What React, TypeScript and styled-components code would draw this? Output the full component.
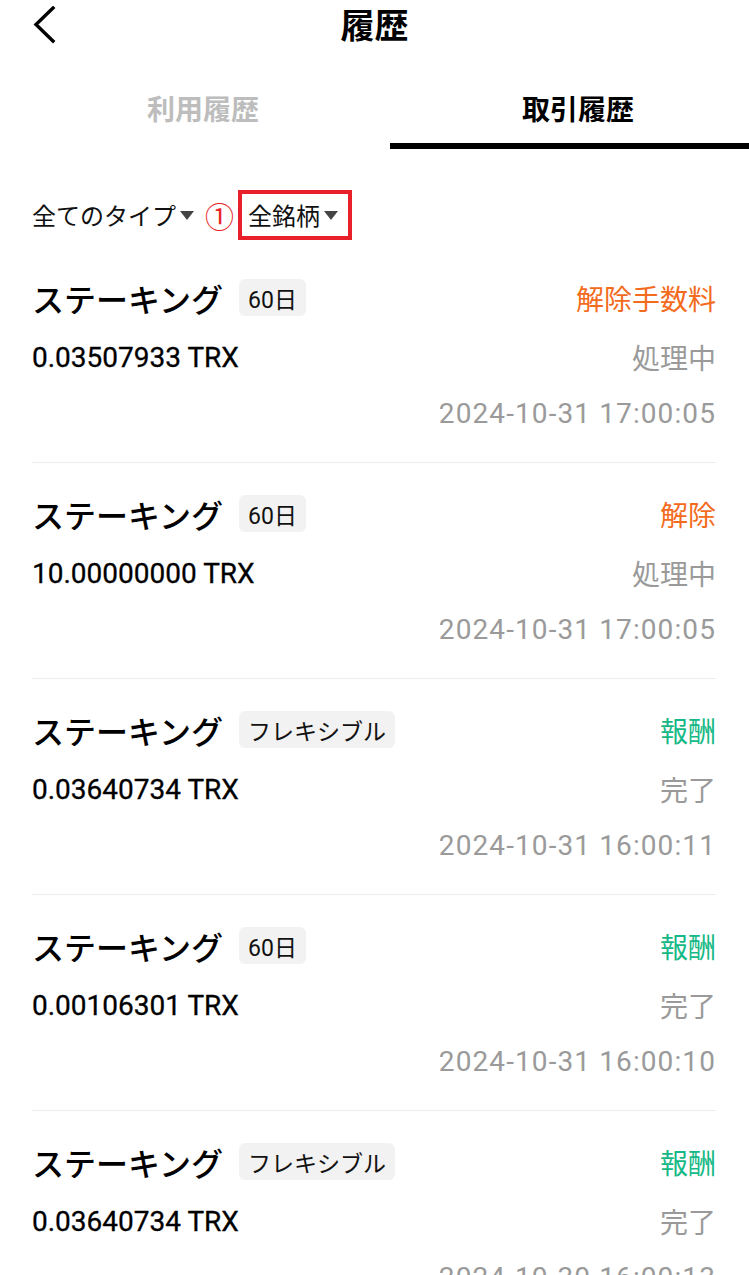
import React from "react";
import styled, { createGlobalStyle } from "styled-components";

const GlobalStyle = createGlobalStyle`
  *{
    box-sizing:border-box;
  }
  html, body{
    margin:0;
    padding:0;
    background:#fff;
    overflow:hidden;
    font-family:"Roboto", "Noto Sans CJK JP", sans-serif;
    color:#111;
  }
`;

const Page = styled.div`
  width: 749px;
  height: 1275px;
  overflow: hidden;
  background: #fff;
`;

const Header = styled.header`
  height: 50px;
  display: grid;
  grid-template-columns: 1fr auto 1fr;
  align-items: center;
`;

const BackButton = styled.button`
  all: unset;
  padding-left: 32px;
  display: flex;
  align-items: center;
  height: 50px;
  cursor: pointer;
`;

const Title = styled.h1`
  margin: 0;
  padding-bottom: 3px;
  font-family: "Noto Sans CJK JP", sans-serif;
  font-size: 34px;
  font-weight: 700;
  line-height: 1.4;
  color: #000;
`;

const TabBar = styled.nav`
  display: grid;
  grid-template-columns: 374px 376px;
  margin-left: 16px;
`;

const Tab = styled.div<{ active: boolean }>`
  height: 99px;
  padding-top: 23px;
  display: flex;
  align-items: center;
  justify-content: center;
  font-family: "Noto Sans CJK JP", sans-serif;
  font-size: 28px;
  font-weight: 700;
  color: ${(props) => (props.active ? "#000" : "#bdbdbd")};
  border-bottom: 6px solid ${(props) => (props.active ? "#000" : "transparent")};
`;

const FilterRow = styled.div`
  display: flex;
  align-items: center;
  padding: 41px 0 0 32px;
  margin-bottom: 7px;
`;

const Filter = styled.div`
  display: flex;
  align-items: center;
  gap: 4px;
  font-family: "Noto Sans CJK JP", sans-serif;
  font-size: 24px;
  color: #111;
  line-height: 1;
`;

const Caret = styled.span`
  width: 0;
  height: 0;
  border-left: 7px solid transparent;
  border-right: 7px solid transparent;
  border-top: 9px solid #444;
`;

const Marker = styled.span`
  margin-left: 11px;
  margin-right: 4px;
  font-family: "Noto Sans CJK JP", sans-serif;
  font-size: 29px;
  line-height: 1;
  color: #e8262a;
`;

const Highlight = styled.div`
  height: 50px;
  padding: 0 10px 0 6px;
  border: 4px solid #e8202a;
  display: flex;
  align-items: center;
`;

const List = styled.section`
  padding: 0 33px 0 32px;
`;

const Card = styled.article`
  padding: 32px 0 29px;
  border-bottom: 1px solid #ececec;
`;

const Row = styled.div<{ top: number; height: number }>`
  display: flex;
  align-items: center;
  justify-content: space-between;
  height: ${(props) => props.height}px;
  margin-top: ${(props) => props.top}px;
`;

const Left = styled.div`
  display: flex;
  align-items: center;
`;

const Name = styled.span`
  font-family: "Noto Sans CJK JP", sans-serif;
  font-size: 32px;
  font-weight: 500;
  color: #000;
`;

const Tag = styled.span`
  margin-left: 16px;
  height: 37px;
  padding: 0 9px;
  border-radius: 6px;
  background: #f2f2f2;
  display: flex;
  align-items: center;
  font-family: "Roboto", "Noto Sans CJK JP", sans-serif;
  font-size: 23px;
  color: #111;
`;

const Kind = styled.span<{ tone: "orange" | "green" }>`
  font-family: "Noto Sans CJK JP", sans-serif;
  font-size: 28px;
  color: ${(props) => (props.tone === "orange" ? "#f36b1c" : "#16b985")};
`;

const Amount = styled.span`
  font-size: 28px;
  font-weight: 400;
  color: #000;
  -webkit-text-stroke: 0.3px #000;
`;

const Muted = styled.span<{ spaced?: boolean }>`
  font-family: "Roboto", "Noto Sans CJK JP", sans-serif;
  font-size: 28px;
  color: #9a9a9a;
  letter-spacing: ${(props) => (props.spaced ? "1.1px" : "0")};
`;

interface IRecord {
  term: string;
  kind: string;
  tone: "orange" | "green";
  amount: string;
  status: string;
  time: string;
}

const records: IRecord[] = [
  {
    term: "60日",
    kind: "解除手数料",
    tone: "orange",
    amount: "0.03507933 TRX",
    status: "処理中",
    time: "2024-10-31 17:00:05",
  },
  {
    term: "60日",
    kind: "解除",
    tone: "orange",
    amount: "10.00000000 TRX",
    status: "処理中",
    time: "2024-10-31 17:00:05",
  },
  {
    term: "フレキシブル",
    kind: "報酬",
    tone: "green",
    amount: "0.03640734 TRX",
    status: "完了",
    time: "2024-10-31 16:00:11",
  },
  {
    term: "60日",
    kind: "報酬",
    tone: "green",
    amount: "0.00106301 TRX",
    status: "完了",
    time: "2024-10-31 16:00:10",
  },
  {
    term: "フレキシブル",
    kind: "報酬",
    tone: "green",
    amount: "0.03640734 TRX",
    status: "完了",
    time: "2024-10-30 16:00:13",
  },
];

function App() {
  return (
    <>
      <GlobalStyle />
      <Page>
        <Header>
          <BackButton aria-label="back">
            <svg width="24" height="38" viewBox="0 0 24 38">
              <polyline
                points="21,2 4,18.5 21,35"
                fill="none"
                stroke="#000"
                strokeWidth="3.4"
                strokeLinecap="square"
              />
            </svg>
          </BackButton>
          <Title>履歴</Title>
          <div />
        </Header>
        <TabBar>
          <Tab active={false}>利用履歴</Tab>
          <Tab active={true}>取引履歴</Tab>
        </TabBar>
        <FilterRow>
          <Filter>
            全てのタイプ
            <Caret />
          </Filter>
          <Marker>①</Marker>
          <Highlight>
            <Filter>
              全銘柄
              <Caret />
            </Filter>
          </Highlight>
        </FilterRow>
        <List>
          {records.map((record, idx) => (
            <Card key={idx}>
              <Row top={0} height={37}>
                <Left>
                  <Name>ステーキング</Name>
                  <Tag>{record.term}</Tag>
                </Left>
                <Kind tone={record.tone}>{record.kind}</Kind>
              </Row>
              <Row top={21} height={40}>
                <Amount>{record.amount}</Amount>
                <Muted>{record.status}</Muted>
              </Row>
              <Row top={16} height={40} style={{ justifyContent: "flex-end" }}>
                <Muted spaced>{record.time}</Muted>
              </Row>
            </Card>
          ))}
        </List>
      </Page>
    </>
  );
}

export default App;
